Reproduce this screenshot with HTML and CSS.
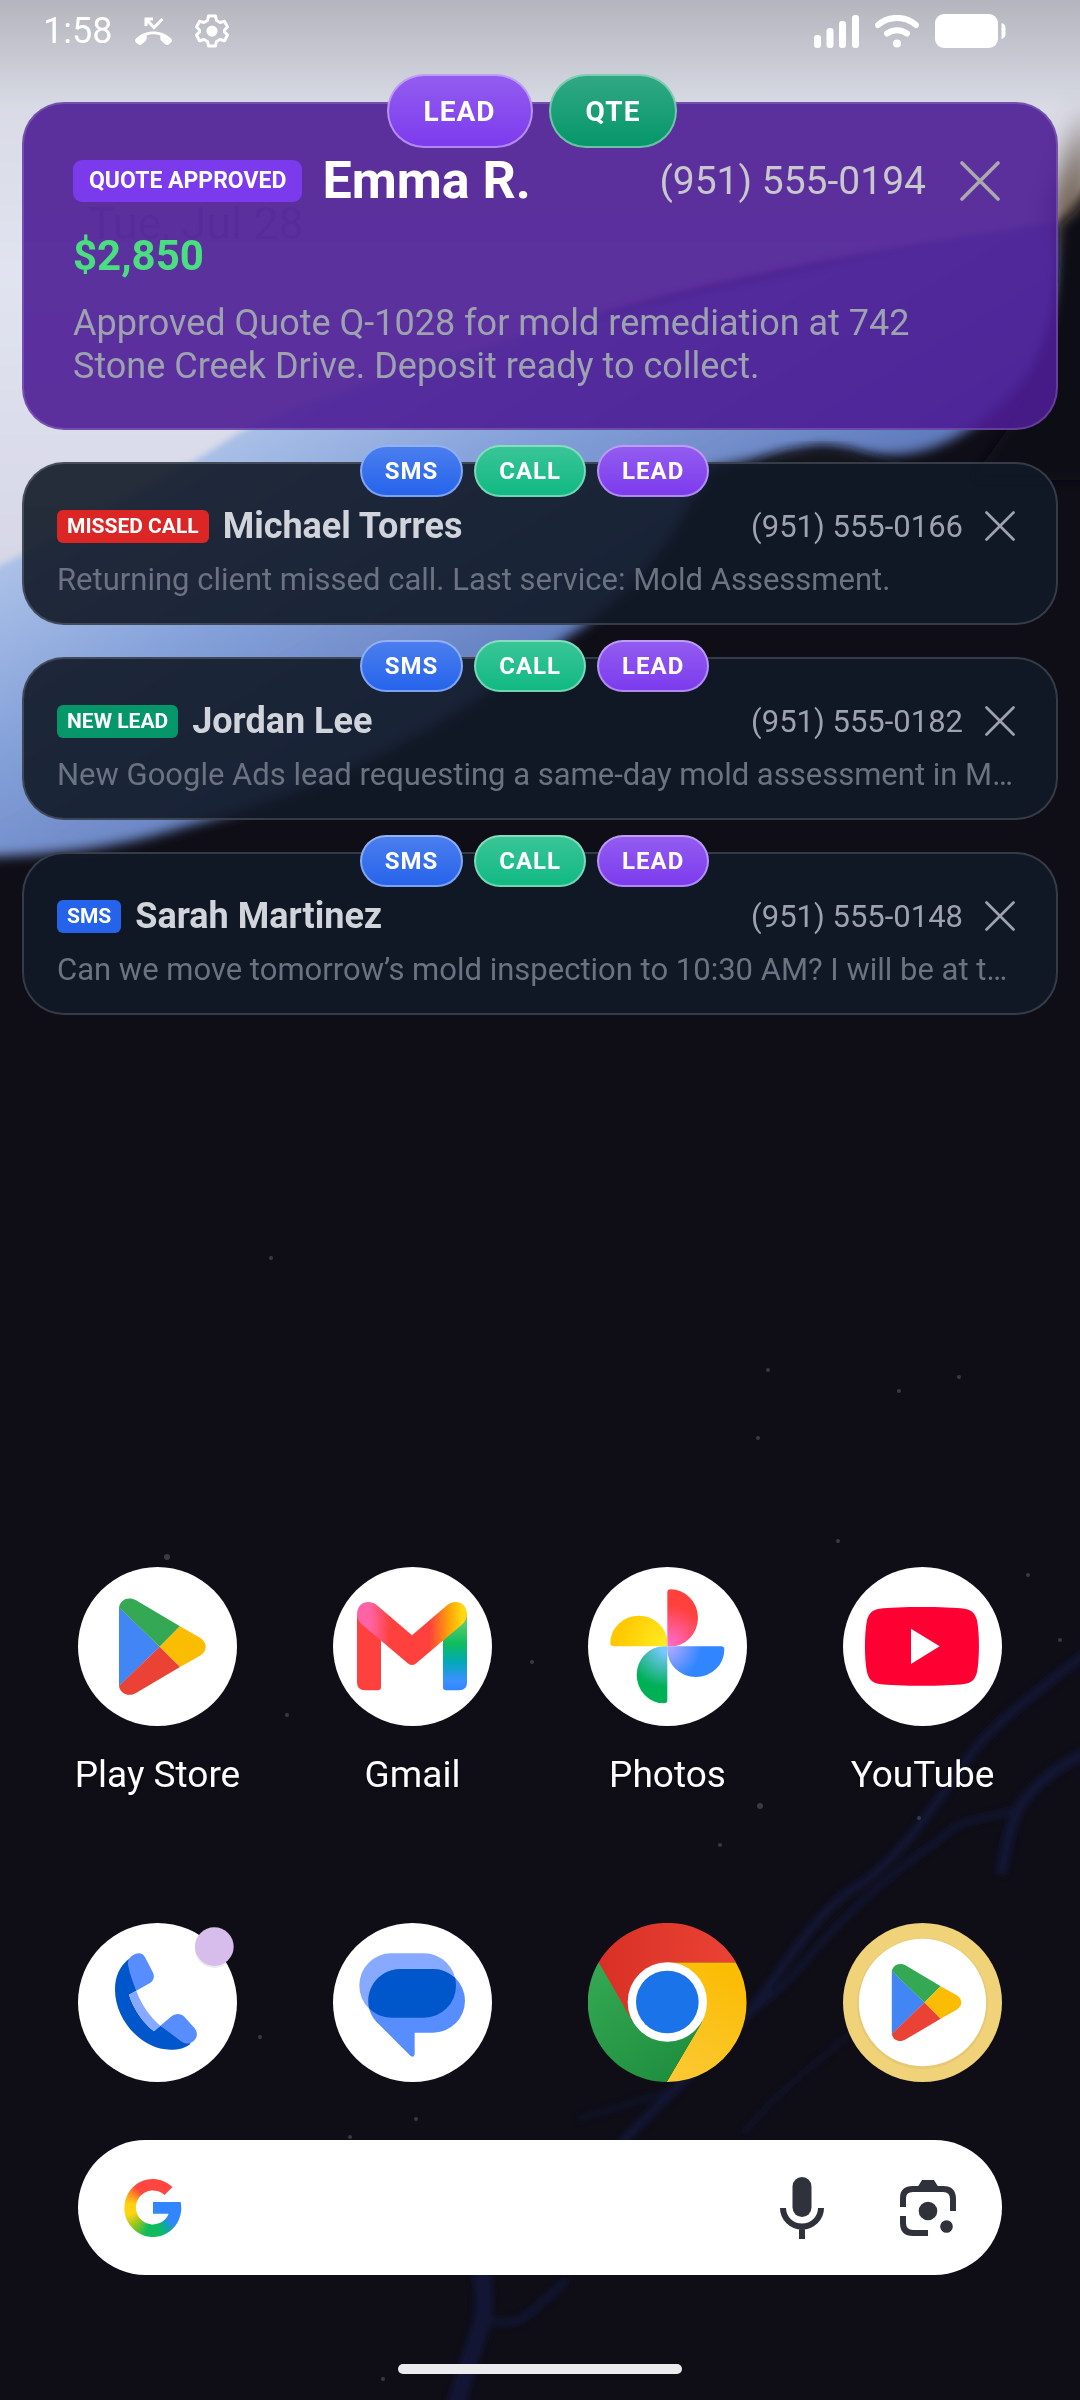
FILE: index.html
```html
<!DOCTYPE html>
<html lang="en">
<head>
    <meta charset="UTF-8">
    <meta name="viewport" content="width=device-width, initial-scale=1.0">
    <title>Home</title>
    <link rel="stylesheet" href="styles.css">
</head>
<body>
    <!-- Wallpaper -->
    <svg class="wallpaper" viewBox="0 0 1080 2400" preserveAspectRatio="none" aria-hidden="true">
        <defs>
            <linearGradient id="snow" x1="0" y1="0" x2="0" y2="1">
                <stop offset="0" stop-color="#d2d3dc"/>
                <stop offset="0.5" stop-color="#e1e4f0"/>
                <stop offset="1" stop-color="#d6d6e6"/>
            </linearGradient>
            <linearGradient id="ice" gradientUnits="userSpaceOnUse" x1="180" y1="420" x2="420" y2="820">
                <stop offset="0" stop-color="#b3c8ea"/>
                <stop offset="0.4" stop-color="#86a2da"/>
                <stop offset="1" stop-color="#5570b4"/>
            </linearGradient>
            <linearGradient id="scrim" x1="0" y1="0" x2="0" y2="1">
                <stop offset="0" stop-color="#000" stop-opacity="0.15"/>
                <stop offset="1" stop-color="#000" stop-opacity="0"/>
            </linearGradient>
            <filter id="soft" x="-20%" y="-20%" width="140%" height="140%"><feGaussianBlur stdDeviation="6"/></filter>
            <filter id="softer" x="-50%" y="-50%" width="200%" height="200%"><feGaussianBlur stdDeviation="14"/></filter>
            <filter id="edge" x="-20%" y="-20%" width="140%" height="140%"><feGaussianBlur stdDeviation="3"/></filter>
        </defs>
        <rect width="1080" height="2400" fill="#0f0e17"/>
        <path d="M-40 380L300 380L1056 210C1068 280 1056 350 1010 395C975 430 935 455 890 455C860 455 850 448 820 446L710 468C680 530 640 590 570 635C480 700 380 775 190 825C110 850 60 854 -40 858Z" fill="url(#ice)" filter="url(#soft)"/>
        <path d="M-40 -40H1120V150C1085 180 1075 205 1056 222C880 250 700 280 540 332C420 365 330 390 240 432C150 490 90 520 -40 586Z" fill="url(#snow)" filter="url(#edge)"/>
        <path d="M1090 110C1070 150 1052 190 1044 222L1090 260Z" fill="#6b5a4d" filter="url(#softer)"/>
        <path d="M1060 226L1100 190V480H970C1026 410 1064 350 1060 226Z" fill="#0f0e17" filter="url(#soft)"/>
        <path d="M740 480C760 452 800 444 850 450C880 464 920 464 940 480Z" fill="#14141f" opacity="0.8" filter="url(#soft)"/>
        <rect width="1080" height="110" fill="url(#scrim)"/>
        <g fill="none" stroke="#141d48" stroke-linecap="round" opacity="0.6" filter="url(#edge)">
            <path d="M1090 1650C1040 1690 1010 1710 978 1745C950 1780 910 1850 860 1885C820 1905 790 1960 751 2010C720 2050 680 2080 620 2145" stroke-width="9"/>
            <path d="M1090 1750C1050 1770 1030 1790 1019 1808C1008 1830 1006 1850 1002 1870" stroke-width="11"/>
            <path d="M1019 1808C985 1822 960 1815 940 1840C900 1865 850 1910 815 1950C800 1970 780 1990 752 2012" stroke-width="6"/>
            <path d="M854 2031C820 2060 790 2080 744 2132M675 2090C640 2100 610 2110 580 2118" stroke-width="5" opacity="0.7"/>
            <path d="M482 2275C484 2300 486 2315 478 2335C470 2360 462 2380 455 2410" stroke-width="18"/>
            <path d="M565 2282C545 2300 535 2310 520 2320C505 2324 496 2322 484 2318" stroke-width="7"/>
        </g>
        <g fill="#6d7078" opacity="0.45">
            <circle cx="271" cy="1258" r="2"/>
            <circle cx="167" cy="1557" r="3"/>
            <circle cx="959" cy="1377" r="2"/>
            <circle cx="899" cy="1391" r="2"/>
            <circle cx="768" cy="1370" r="2"/>
            <circle cx="758" cy="1438" r="2"/>
            <circle cx="838" cy="1541" r="2"/>
            <circle cx="1028" cy="1575" r="2"/>
            <circle cx="1060" cy="1640" r="2"/>
            <circle cx="760" cy="1806" r="3"/>
            <circle cx="720" cy="1845" r="2"/>
            <circle cx="919" cy="1818" r="2"/>
            <circle cx="260" cy="2037" r="2"/>
            <circle cx="416" cy="2119" r="2"/>
            <circle cx="350" cy="2137" r="2"/>
            <circle cx="383" cy="2379" r="2"/>
            <circle cx="287" cy="1715" r="2"/>
            <circle cx="532" cy="1662" r="2"/>
        </g>
    </svg>

    <!-- Shared icon shapes -->
    <svg class="symbols" aria-hidden="true">
        <symbol id="close" viewBox="0 0 40 40">
            <path d="M2 2L38 38M38 2L2 38" fill="none" stroke="currentColor" stroke-width="3.6" stroke-linecap="round"/>
        </symbol>
        <symbol id="play-mark" viewBox="0 0 477 477">
            <path d="M123 120L245 239L123 358Z" fill="#4285f4"/>
            <path d="M123 121C127 98 152 87 174 100L306 178L245 239Z" fill="#34a853"/>
            <path d="M306 178L366 212C389 226 389 252 366 266L306 300L245 239Z" fill="#fbbc04"/>
            <path d="M123 357C127 380 152 391 174 378L306 300L245 239Z" fill="#ea4335"/>
        </symbol>
    </svg>

    <div class="screen">
        <header class="status-bar">
            <time class="clock">1:58</time>
            <svg class="missed-icon" viewBox="0 0 39 28" fill="#fff" aria-hidden="true">
                <path d="M2 21.5C11 12 28 12 37 21.5Q39 23.5 37 25.5L35 27.3Q33 29 31 27L27.5 24Q26.3 23 26.3 21V18.5Q19.5 16 12.7 18.5V21Q12.7 23 11.5 24L8 27Q6 29 4 27.3L2 25.5Q0 23.5 2 21.5Z"/>
                <path d="M12 9V2H19M12.5 2.5L20 10.5L28.5 2" fill="none" stroke="#fff" stroke-width="3"/>
            </svg>
            <svg class="gear-icon" viewBox="0 0 34 34" aria-hidden="true">
                <path d="M13.5 2H20.5L21.5 6.5L25 8.5L29.5 7.2L32.5 13L29.5 16V18L32.5 21L29.5 26.8L25 25.5L21.5 27.5L20.5 32H13.5L12.5 27.5L9 25.5L4.5 26.8L1.5 21L4.5 18V16L1.5 13L4.5 7.2L9 8.5L12.5 6.5Z" fill="none" stroke="#fff" stroke-width="3" stroke-linejoin="round"/>
                <circle cx="17" cy="17" r="5.5" fill="#fff"/>
            </svg>
            <svg class="signal-icon" viewBox="0 0 45 33" fill="#fff" aria-hidden="true">
                <rect x="0" y="20" width="7" height="13" rx="3"/>
                <rect x="12.5" y="13" width="7" height="20" rx="3"/>
                <rect x="25" y="6" width="7" height="27" rx="3"/>
                <rect x="38" y="0" width="7" height="33" rx="3"/>
            </svg>
            <svg class="wifi-icon" viewBox="0 0 44 33" fill="none" stroke="#fff" stroke-linecap="round" aria-hidden="true">
                <path d="M3 10C14 0.5 30 0.5 41 10" stroke-width="6"/>
                <path d="M12 18.5C18 14 26 14 32 18.5" stroke-width="6"/>
                <circle cx="22" cy="28.5" r="4" fill="#fff" stroke="none"/>
            </svg>
            <svg class="battery-icon" viewBox="0 0 71 34" fill="#fff" aria-hidden="true">
                <rect width="63" height="34" rx="9"/>
                <path d="M66.5 9Q70.5 10 70.5 14V20Q70.5 24 66.5 25Z"/>
            </svg>
        </header>

        <main class="alerts">
            <p class="date">Tue, Jul 28</p>

            <article class="card card-featured">
                <div class="actions">
                    <button class="pill lead">LEAD</button>
                    <button class="pill quote">QTE</button>
                </div>
                <div class="card-head">
                    <span class="badge badge-quote">QUOTE APPROVED</span>
                    <h2 class="name">Emma R.</h2>
                    <a class="phone" href="tel:+19515550194">(951) 555-0194</a>
                    <button class="close" aria-label="Dismiss Emma R."><svg><use href="#close"/></svg></button>
                </div>
                <p class="price">$2,850</p>
                <p class="message">Approved Quote Q-1028 for mold remediation at 742 Stone Creek Drive. Deposit ready to collect.</p>
            </article>

            <article class="card">
                <div class="actions">
                    <button class="pill sms">SMS</button>
                    <button class="pill call">CALL</button>
                    <button class="pill lead">LEAD</button>
                </div>
                <div class="card-head">
                    <span class="badge badge-missed">MISSED CALL</span>
                    <h2 class="name">Michael Torres</h2>
                    <a class="phone" href="tel:+19515550166">(951) 555-0166</a>
                    <button class="close" aria-label="Dismiss Michael Torres"><svg><use href="#close"/></svg></button>
                </div>
                <p class="message">Returning client missed call. Last service: Mold Assessment.</p>
            </article>

            <article class="card">
                <div class="actions">
                    <button class="pill sms">SMS</button>
                    <button class="pill call">CALL</button>
                    <button class="pill lead">LEAD</button>
                </div>
                <div class="card-head">
                    <span class="badge badge-new">NEW LEAD</span>
                    <h2 class="name">Jordan Lee</h2>
                    <a class="phone" href="tel:+19515550182">(951) 555-0182</a>
                    <button class="close" aria-label="Dismiss Jordan Lee"><svg><use href="#close"/></svg></button>
                </div>
                <p class="message">New Google Ads lead requesting a same-day mold assessment in Murrieta.</p>
            </article>

            <article class="card">
                <div class="actions">
                    <button class="pill sms">SMS</button>
                    <button class="pill call">CALL</button>
                    <button class="pill lead">LEAD</button>
                </div>
                <div class="card-head">
                    <span class="badge badge-sms">SMS</span>
                    <h2 class="name">Sarah Martinez</h2>
                    <a class="phone" href="tel:+19515550148">(951) 555-0148</a>
                    <button class="close" aria-label="Dismiss Sarah Martinez"><svg><use href="#close"/></svg></button>
                </div>
                <p class="message">Can we move tomorrow’s mold inspection to 10:30 AM? I will be at the property.</p>
            </article>
        </main>

        <nav class="apps">
            <a class="app" href="#">
                <svg class="app-icon" viewBox="0 0 477 477">
                    <circle cx="238.5" cy="238.5" r="238.5" fill="#fff"/>
                    <use href="#play-mark" width="477" height="477"/>
                </svg>
                <span>Play Store</span>
            </a>
            <a class="app" href="#">
                <svg class="app-icon" viewBox="0 0 477 477">
                    <defs>
                        <linearGradient id="mail-top" gradientUnits="userSpaceOnUse" x1="72" y1="0" x2="402" y2="0">
                            <stop offset="0.12" stop-color="#ff63a3"/>
                            <stop offset="0.3" stop-color="#ff413d"/>
                            <stop offset="0.66" stop-color="#ff413d"/>
                            <stop offset="0.84" stop-color="#ffa508"/>
                            <stop offset="0.96" stop-color="#ffd90f"/>
                        </linearGradient>
                        <linearGradient id="mail-leg" gradientUnits="userSpaceOnUse" x1="0" y1="170" x2="0" y2="370">
                            <stop offset="0" stop-color="#55cc6c"/>
                            <stop offset="0.3" stop-color="#0ebc5f"/>
                            <stop offset="0.58" stop-color="#02a9b9"/>
                            <stop offset="0.85" stop-color="#3c90ff"/>
                            <stop offset="1" stop-color="#3186ff"/>
                        </linearGradient>
                    </defs>
                    <circle cx="238.5" cy="238.5" r="238.5" fill="#fff"/>
                    <path d="M72 140L144 215V360Q144 370 134 370H96Q72 370 72 346Z" fill="#ff413d"/>
                    <path d="M402 140L330 215V360Q330 370 340 370H378Q402 370 402 346Z" fill="url(#mail-leg)"/>
                    <path d="M72 142C72 108 106 94 132 115L237 205L342 115C368 94 402 108 402 142C402 155 396 165 388 172L248 290Q237 298 226 290L86 172C78 165 72 155 72 142Z" fill="url(#mail-top)"/>
                </svg>
                <span>Gmail</span>
            </a>
            <a class="app" href="#">
                <svg class="app-icon" viewBox="0 0 477 477">
                    <defs>
                        <radialGradient id="ph-red" gradientUnits="userSpaceOnUse" cx="238" cy="238" r="130">
                            <stop offset="0" stop-color="#ff6fd8"/>
                            <stop offset="0.95" stop-color="#ff413d"/>
                        </radialGradient>
                        <radialGradient id="ph-blue" gradientUnits="userSpaceOnUse" cx="238" cy="238" r="120">
                            <stop offset="0.1" stop-color="#a9a8ff"/>
                            <stop offset="0.85" stop-color="#3186ff"/>
                        </radialGradient>
                        <radialGradient id="ph-green" gradientUnits="userSpaceOnUse" cx="238" cy="238" r="130">
                            <stop offset="0.15" stop-color="#76c7ff"/>
                            <stop offset="0.95" stop-color="#00b057"/>
                        </radialGradient>
                        <radialGradient id="ph-yellow" gradientUnits="userSpaceOnUse" cx="238" cy="238" r="150">
                            <stop offset="0" stop-color="#ffee24"/>
                            <stop offset="1" stop-color="#ffc800"/>
                        </radialGradient>
                    </defs>
                    <circle cx="238.5" cy="238.5" r="238.5" fill="#fff"/>
                    <path d="M238 238V77Q238 67 248 67A82 85.5 0 0 1 248 238Z" fill="url(#ph-red)"/>
                    <path d="M238 238V77Q238 67 248 67A82 85.5 0 0 1 248 238Z" fill="url(#ph-blue)" transform="rotate(90 238 238)"/>
                    <path d="M238 238V77Q238 67 248 67A82 85.5 0 0 1 248 238Z" fill="url(#ph-green)" transform="rotate(180 238 238)"/>
                    <path d="M238 238V77Q238 67 248 67A82 85.5 0 0 1 248 238Z" fill="url(#ph-yellow)" transform="rotate(270 238 238)"/>
                </svg>
                <span>Photos</span>
            </a>
            <a class="app" href="#">
                <svg class="app-icon" viewBox="0 0 477 477">
                    <circle cx="238.5" cy="238.5" r="238.5" fill="#fff"/>
                    <path d="M72 160C78 138 88 128 110 125C160 118 314 118 364 125C386 128 396 138 402 160C410 200 410 276 402 316C396 338 386 348 364 351C314 358 160 358 110 351C88 348 78 338 72 316C64 276 64 200 72 160Z" fill="#ff0033"/>
                    <path d="M204 185L290 238L204 291Z" fill="#fff"/>
                </svg>
                <span>YouTube</span>
            </a>
        </nav>

        <nav class="dock">
            <a class="app" href="#" aria-label="Phone">
                <svg class="app-icon" viewBox="0 0 477 477">
                    <circle cx="238.5" cy="238.5" r="238.5" fill="#fff"/>
                    <path d="M152 108C125 130 111 160 111 200C111 290 190 380 278 380C302 380 322 375 338 362L247 308L228 325C195 298 168 262 153 215L175 203Z" fill="#0057cc"/>
                    <path d="M175 203L153 215C165 255 195 300 228 325L247 308C215 280 190 245 175 203Z" fill="#87a9ff"/>
                    <path d="M175 203C164 178 155 150 150 125C149 112 153 107 160 100C178 86 194 89 202 104L224 147C231 160 228 172 216 180Z" fill="#588dff"/>
                    <path d="M247 308L279 281C292 270 308 270 319 281L350 316C360 329 358 343 349 352C337 365 322 363 311 356Z" fill="#588dff"/>
                    <circle cx="409" cy="76" r="59" fill="#000" opacity="0.08"/>
                    <circle cx="409" cy="71" r="58" fill="#d7bdec"/>
                </svg>
            </a>
            <a class="app" href="#" aria-label="Messages">
                <svg class="app-icon" viewBox="0 0 477 477">
                    <defs>
                        <clipPath id="bubble-back"><rect x="79" y="91" width="290" height="193" rx="96"/></clipPath>
                    </defs>
                    <circle cx="238.5" cy="238.5" r="238.5" fill="#fff"/>
                    <rect x="79" y="91" width="290" height="193" rx="96" fill="#87a9ff"/>
                    <path d="M202 138H300A96 95.5 0 0 1 300 329H245V394Q243 406 232 398L130 296C115 280 106 260 106 235C106 180 150 138 202 138Z" fill="#588dff"/>
                    <path d="M202 138H300A96 95.5 0 0 1 300 329H245V394Q243 406 232 398L130 296C115 280 106 260 106 235C106 180 150 138 202 138Z" fill="#0057cc" clip-path="url(#bubble-back)"/>
                </svg>
            </a>
            <a class="app" href="#" aria-label="Chrome">
                <svg class="app-icon" viewBox="0 0 477 477">
                    <defs>
                        <linearGradient id="cr-red">
                            <stop offset="0" stop-color="#d93025"/>
                            <stop offset="1" stop-color="#ea4335"/>
                        </linearGradient>
                        <linearGradient id="cr-green" x1="0.8" y1="1" x2="0.1" y2="0">
                            <stop offset="0" stop-color="#1e8e3e"/>
                            <stop offset="1" stop-color="#34a853"/>
                        </linearGradient>
                        <linearGradient id="cr-yellow" x1="0.2" y1="1" x2="0.6" y2="0">
                            <stop offset="0" stop-color="#fcc934"/>
                            <stop offset="1" stop-color="#fbbc04"/>
                        </linearGradient>
                    </defs>
                    <path d="M443 118A238.5 238.5 0 0 1 236 477L341 298L238 238V118Z" fill="url(#cr-yellow)"/>
                    <path d="M32 118A238.5 238.5 0 0 0 236 477L342 298L238 238Z" fill="url(#cr-green)"/>
                    <path d="M32 118A238.5 238.5 0 0 1 444 118H238L238 238L135 297Z" fill="url(#cr-red)"/>
                    <circle cx="238" cy="237" r="119" fill="#fff"/>
                    <circle cx="238" cy="237" r="94" fill="#1a73e8"/>
                </svg>
            </a>
            <a class="app" href="#" aria-label="Play Store">
                <svg class="app-icon" viewBox="0 0 477 477">
                    <circle cx="238.5" cy="238.5" r="238.5" fill="#f0d279"/>
                    <circle cx="238.5" cy="242" r="196" fill="#dcbf6b" opacity="0.5"/>
                    <circle cx="238.5" cy="238.5" r="191" fill="#fff"/>
                    <use href="#play-mark" x="48" y="47" width="382" height="382"/>
                </svg>
            </a>
        </nav>

        <form class="search" role="search">
            <span class="google-logo"></span>
            <input class="search-input" type="search" aria-label="Search">
            <button class="search-button" type="button" aria-label="Voice search">
                <svg class="mic-icon" viewBox="0 0 44 62" fill="#2f313b">
                    <rect x="12.5" y="0" width="19" height="40" rx="9.5"/>
                    <path d="M3 31A19 18.5 0 0 0 41 31M22 50V62" fill="none" stroke="#2f313b" stroke-width="6"/>
                </svg>
            </button>
            <button class="search-button" type="button" aria-label="Search with camera">
                <svg class="lens-icon" viewBox="0 0 56 56" fill="#2f313b">
                    <path d="M3 27V18Q3 9 13 9H43Q53 9 53 19V31M3 36V43Q3 53 13 53H28" fill="none" stroke="#2f313b" stroke-width="6"/>
                    <path d="M17 8L22 0H34L39 8V12H17Z"/>
                    <circle cx="28" cy="31" r="9.3"/>
                    <circle cx="46.5" cy="46.5" r="6.3"/>
                </svg>
            </button>
        </form>

        <div class="home-handle"></div>
    </div>
</body>
</html>
```
FILE: styles.css
```css
:root {
    --violet: #7c3aed;
    --green: #059669;
    --mint: #10b981;
    --blue: #2563eb;
    --red: #dc2626;
    --outline: rgba(255, 255, 255, 0.16);
}

* {
    box-sizing: border-box;
}

body {
    margin: 0;
    background-color: #0f0e17;
    color: #fff;
    font-family: Roboto, "Liberation Sans", sans-serif;
}

h2,
p {
    margin: 0;
}

button {
    border: none;
    padding: 0;
    background: none;
    color: inherit;
    font-family: inherit;
    cursor: pointer;
}

a {
    color: inherit;
    text-decoration: none;
}

svg {
    display: block;
}

.wallpaper {
    position: absolute;
    top: 0;
    left: 0;
    width: 100%;
    height: 100%;
    min-height: 100vh;
}

.symbols {
    position: absolute;
    width: 0;
    height: 0;
}

.screen {
    position: relative;
    display: flex;
    flex-direction: column;
    min-height: 100vh;
}

/* Status bar */
.status-bar {
    display: flex;
    align-items: center;
    height: 62px;
    padding: 0 74px 0 43px;
}

.clock {
    font-size: 36px;
    line-height: 42px;
}

.missed-icon {
    width: 39px;
    height: 28px;
    margin-left: 22px;
}

.gear-icon {
    width: 34px;
    height: 34px;
    margin-left: 22px;
    margin-right: auto;
}

.signal-icon {
    width: 45px;
    height: 33px;
}

.wifi-icon {
    width: 44px;
    height: 33px;
    margin-left: 16px;
}

.battery-icon {
    width: 71px;
    height: 34px;
    margin-left: 16px;
}

/* Alert cards */
.alerts {
    position: relative;
    display: flex;
    flex-direction: column;
    gap: 32px;
    padding: 40px 22px 0;
}

.date {
    position: absolute;
    top: 136px;
    left: 88px;
    color: #b8b8ce;
    font-size: 45px;
    line-height: 52px;
}

.card {
    position: relative;
    padding: 40px 41px 24px 33px;
    border: 2px solid var(--outline);
    border-radius: 42px;
    background-color: rgba(17, 24, 39, 0.9);
}

.card-featured {
    padding: 47px 56px 40px 49px;
    background-color: rgba(76, 29, 149, 0.9);
}

.actions {
    position: absolute;
    top: -19px;
    left: 0;
    right: 0;
    display: flex;
    justify-content: center;
}

.card-featured .actions {
    top: -30px;
}

.pill {
    height: 52px;
    margin-right: 11px;
    padding: 0 23px;
    border: 2px solid rgba(255, 255, 255, 0.4);
    border-radius: 26px;
    background-image: linear-gradient(rgba(255, 255, 255, 0.18), rgba(255, 255, 255, 0));
    background-origin: border-box;
    font-size: 24px;
    font-weight: 700;
    letter-spacing: 1px;
}

.card-featured .pill {
    height: 74px;
    margin-right: 16px;
    padding: 0 35px;
    border-radius: 37px;
    font-size: 28px;
}

.lead {
    background-color: var(--violet);
}

.quote {
    background-color: var(--green);
}

.sms {
    background-color: var(--blue);
}

.call {
    background-color: var(--mint);
}

.card-head {
    display: flex;
    align-items: center;
    height: 44px;
}

.card-featured .card-head {
    height: 60px;
}

.badge {
    padding: 0 10px;
    border-radius: 6px;
    font-size: 21px;
    font-weight: 700;
    line-height: 33px;
    white-space: nowrap;
}

.card-featured .badge {
    padding: 0 16px;
    border-radius: 9px;
    font-size: 23px;
    line-height: 42px;
}

.badge-quote {
    background-color: var(--violet);
}

.badge-missed {
    background-color: var(--red);
}

.badge-new {
    background-color: var(--green);
}

.badge-sms {
    background-color: var(--blue);
}

.name {
    margin-left: 14px;
    margin-right: auto;
    color: #d1d5db;
    font-size: 36px;
    font-weight: 700;
    line-height: 44px;
}

.card-featured .name {
    margin-left: 20px;
    color: #fff;
    font-size: 52px;
    line-height: 60px;
}

.phone {
    color: #9ca3af;
    font-size: 31px;
}

.card-featured .phone {
    color: #c8c8cc;
    font-size: 39px;
}

.close {
    margin-left: 22px;
    color: #9ca3af;
}

.close svg {
    width: 30px;
    height: 30px;
}

.card-featured .close {
    margin-left: 34px;
    color: #aaa;
}

.card-featured .close svg {
    width: 40px;
    height: 40px;
}

.price {
    margin-top: 20px;
    color: #4ade80;
    font-size: 42px;
    font-weight: 700;
    line-height: 50px;
}

.message {
    margin-top: 13px;
    overflow: hidden;
    color: #6b7280;
    font-size: 31px;
    line-height: 38px;
    text-overflow: ellipsis;
    white-space: nowrap;
}

.card-featured .message {
    margin-top: 21px;
    color: #9ca3af;
    font-size: 36px;
    line-height: 43px;
    white-space: normal;
}

/* Launcher */
.apps,
.dock {
    display: grid;
    grid-template-columns: repeat(4, 1fr);
    padding: 0 30px;
}

.apps {
    margin-top: auto;
    padding-bottom: 126px;
}

.app {
    display: flex;
    flex-direction: column;
    align-items: center;
    gap: 27px;
    font-size: 37px;
    line-height: 44px;
    text-shadow: 0 1px 3px rgba(0, 0, 0, 0.5);
}

.app-icon {
    width: 159px;
    height: 159px;
}

.search {
    display: flex;
    align-items: center;
    height: 135px;
    margin: 58px 78px 0;
    padding: 0 46px;
    border-radius: 68px;
    background-color: #fff;
}

.google-logo {
    width: 58px;
    height: 58px;
    background:
        linear-gradient(#3186ff, #3186ff) 29px 23px / 16px 12px no-repeat,
        conic-gradient(#ff4641 50deg, #3186ff 60deg 125deg, #12a5a5 145deg, #0ebc5f 165deg 195deg, #8fc520 225deg, #ffd314 255deg 280deg, #ff9a1c 300deg, #ff4641 322deg);
    clip-path: path("M48.5 8.5L40.5 16.5A17 17 0 1 0 44.8 35H29V23.5H56.7A28.5 29 0 1 1 48.5 8.5Z");
}

.search-input {
    flex: 1;
    min-width: 0;
    height: 60px;
    padding: 0 24px;
    border: none;
    outline: none;
    background: none;
    font-size: 36px;
}

.search-button + .search-button {
    margin-left: 76px;
}

.mic-icon {
    width: 44px;
    height: 62px;
}

.lens-icon {
    width: 56px;
    height: 56px;
}

.home-handle {
    align-self: center;
    width: 284px;
    height: 10px;
    margin: 89px 0 26px;
    border-radius: 5px;
    background-color: #ececee;
}
```
